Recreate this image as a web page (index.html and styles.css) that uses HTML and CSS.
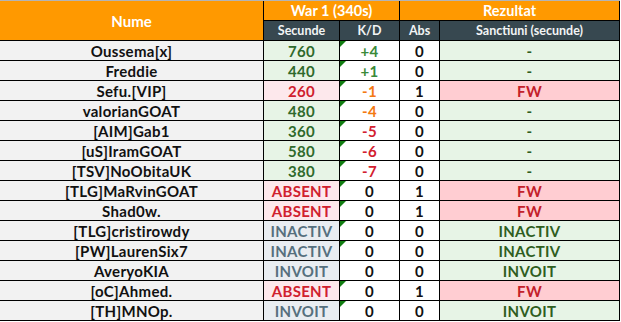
FILE: index.html
```html
<!DOCTYPE html>
<html lang="ro">
<head>
<meta charset="utf-8">
<title>War 1</title>
<link rel="stylesheet" href="styles.css">
</head>
<body>
<table class="sheet">
  <colgroup>
    <col class="c-name"><col class="c-sec"><col class="c-kd"><col class="c-abs"><col class="c-sanc">
  </colgroup>
  <thead>
    <tr class="h1">
      <th rowspan="2" class="orange big">Nume</th>
      <th colspan="2" class="orange">War 1 (340s)</th>
      <th colspan="2" class="orange">Rezultat</th>
    </tr>
    <tr class="h2">
      <th class="dark">Secunde</th>
      <th class="dark">K/D</th>
      <th class="dark">Abs</th>
      <th class="dark">Sanctiuni (secunde)</th>
    </tr>
  </thead>
  <tbody>
    <tr><td class="name">Oussema[x]</td><td class="sec ok">760</td><td class="kd tri pos">+4</td><td class="abs">0</td><td class="sanc ok">-</td></tr>
    <tr><td class="name">Freddie</td><td class="sec ok">440</td><td class="kd tri pos">+1</td><td class="abs">0</td><td class="sanc ok">-</td></tr>
    <tr><td class="name">Sefu.[VIP]</td><td class="sec bad">260</td><td class="kd tri warn">-1</td><td class="abs">1</td><td class="sanc fw">FW</td></tr>
    <tr><td class="name">valorianGOAT</td><td class="sec ok">480</td><td class="kd tri warn">-4</td><td class="abs">0</td><td class="sanc ok">-</td></tr>
    <tr><td class="name">[AIM]Gab1</td><td class="sec ok">360</td><td class="kd tri neg">-5</td><td class="abs">0</td><td class="sanc ok">-</td></tr>
    <tr><td class="name">[uS]IramGOAT</td><td class="sec ok">580</td><td class="kd tri neg">-6</td><td class="abs">0</td><td class="sanc ok">-</td></tr>
    <tr><td class="name">[TSV]NoObitaUK</td><td class="sec ok">380</td><td class="kd tri neg">-7</td><td class="abs">0</td><td class="sanc ok">-</td></tr>
    <tr><td class="name">[TLG]MaRvinGOAT</td><td class="sec bad">ABSENT</td><td class="kd tri">0</td><td class="abs">1</td><td class="sanc fw">FW</td></tr>
    <tr><td class="name">Shad0w.</td><td class="sec bad">ABSENT</td><td class="kd tri">0</td><td class="abs">1</td><td class="sanc fw">FW</td></tr>
    <tr><td class="name">[TLG]cristirowdy</td><td class="sec idle">INACTIV</td><td class="kd tri">0</td><td class="abs">0</td><td class="sanc ok">INACTIV</td></tr>
    <tr><td class="name">[PW]LaurenSix7</td><td class="sec idle">INACTIV</td><td class="kd tri">0</td><td class="abs">0</td><td class="sanc ok">INACTIV</td></tr>
    <tr><td class="name">AveryoKIA</td><td class="sec idle">INVOIT</td><td class="kd">0</td><td class="abs">0</td><td class="sanc ok">INVOIT</td></tr>
    <tr><td class="name">[oC]Ahmed.</td><td class="sec bad">ABSENT</td><td class="kd tri">0</td><td class="abs">1</td><td class="sanc fw">FW</td></tr>
    <tr><td class="name">[TH]MNOp.</td><td class="sec idle">INVOIT</td><td class="kd tri">0</td><td class="abs">0</td><td class="sanc ok">INVOIT</td></tr>
  </tbody>
</table>
</body>
</html>
```
FILE: styles.css
```css
html, body {
  margin: 0;
  padding: 0;
  background: #ffffff;
}

.sheet {
  border-collapse: separate;
  border-spacing: 0;
  table-layout: fixed;
  width: 620px;
  border-top: 1px solid #b4b4b4;
  font-family: "Lato", "Liberation Sans", sans-serif;
  font-weight: 700;
  font-size: 15px;
  letter-spacing: 0.3px;
  color: #111;
}

.c-name { width: 264px; }
.c-sec { width: 76px; }
.c-kd { width: 60px; }
.c-abs { width: 40px; }
.c-sanc { width: 180px; }

.sheet th,
.sheet td {
  padding: 1px 0 0;
  height: 18px;
  border-right: 1px solid #000;
  border-bottom: 1px solid #000;
  text-align: center;
  vertical-align: middle;
  line-height: 18px;
  white-space: nowrap;
  overflow: hidden;
}

.orange {
  background: #ff9900;
  color: #ffffff;
  font-size: 14.5px;
  letter-spacing: 0;
}

.orange.big {
  font-size: 15px;
}

.dark {
  background: #374850;
  color: #f2f4f5;
  font-size: 12.5px;
  letter-spacing: 0;
}

.name {
  background: #f2f2f2;
  color: #111;
}

.sec.ok { background: #e7f4e6; color: #2f6a2c; }
.sec.bad { background: #fde8ec; color: #d0202e; }
.sec.idle { background: #e9edf1; color: #56707e; }

.kd {
  position: relative;
  background: #ffffff;
  color: #111;
}
.kd.pos { color: #3a8a3a; }
.kd.warn { color: #f47a12; }
.kd.neg { color: #d3202e; }

.kd.tri::before {
  content: "";
  position: absolute;
  left: 0;
  top: 0;
  width: 6px;
  height: 6px;
  background: #107c10;
  clip-path: polygon(0 0, 100% 0, 0 100%);
}

.abs {
  background: #ffffff;
  color: #111;
}

.sanc.ok { background: #e7f4e6; color: #2f5e1e; }
.sanc.fw { background: #ffcdd2; color: #c3202b; }
```
